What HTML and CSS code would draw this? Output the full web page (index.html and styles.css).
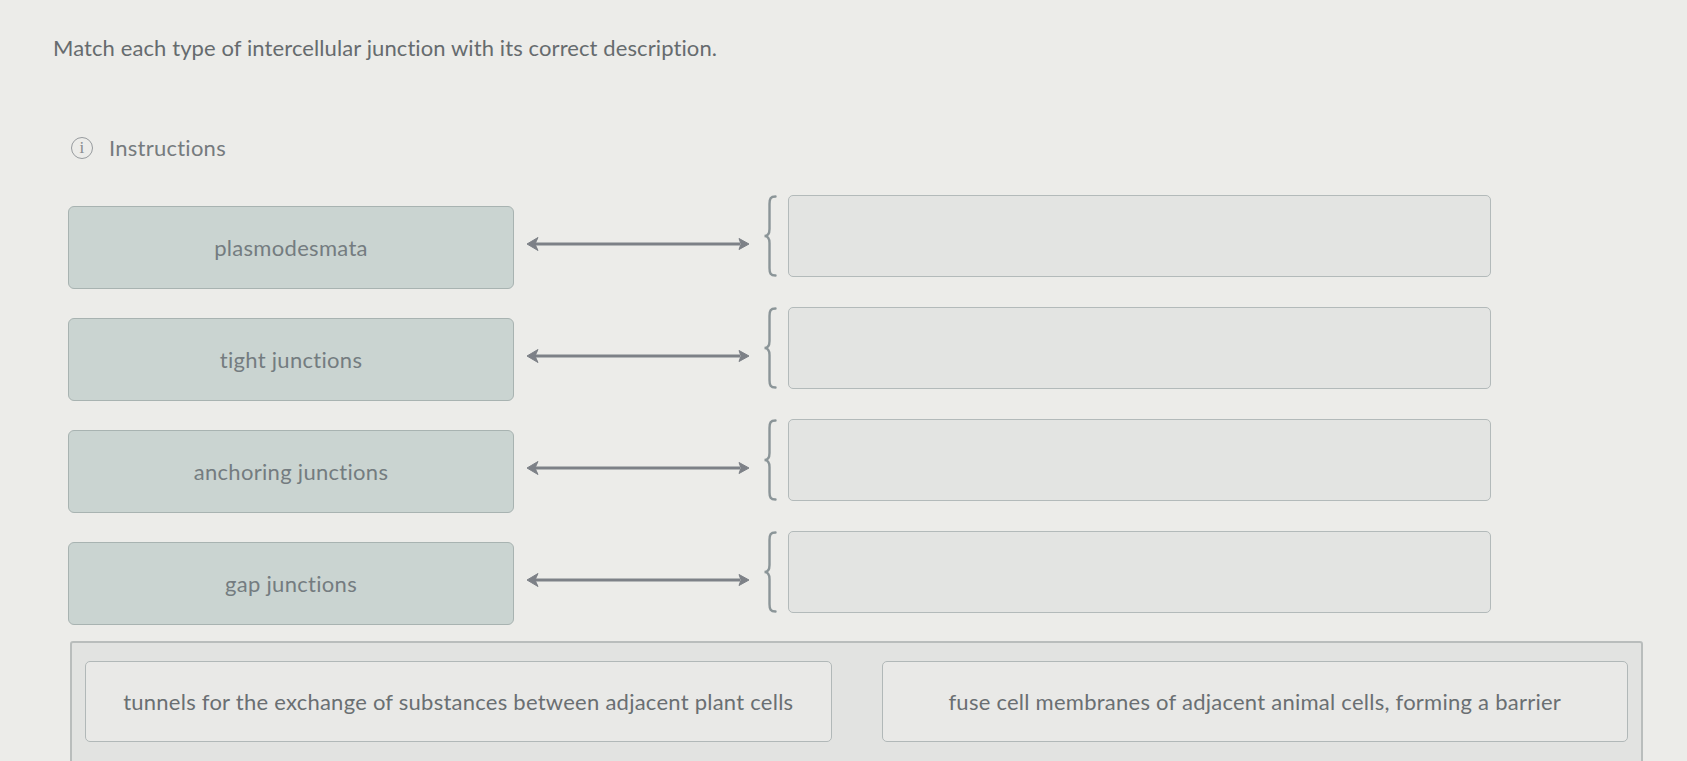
FILE: index.html
```html
<!DOCTYPE html>
<html lang="en">
<head>
<meta charset="utf-8">
<title>Match intercellular junctions</title>
<link rel="stylesheet" href="styles.css">
</head>
<body>
<div class="page">
  <h1 class="prompt">Match each type of intercellular junction with its correct description.</h1>

  <div class="instructions">
    <span class="info-icon">i</span>
    <span class="instructions-label">Instructions</span>
  </div>

  <div class="rows">
    <div class="row">
      <div class="term">plasmodesmata</div>
      <svg class="arrow" viewBox="0 0 222 14" aria-hidden="true">
        <line x1="8" y1="7" x2="213" y2="7"/>
        <polygon points="0,7 11,0.5 8,7 11,13.5"/>
        <polygon points="222,7 212,1.5 214,7 212,12.5"/>
      </svg>
      <div class="target">
        <svg class="brace" viewBox="0 0 14 82" aria-hidden="true"><path d="M12.5 1.5 C7.5 1.5 6.5 3.5 6.5 9 L6.5 34 C6.5 38.5 4.5 41 1.5 41 C4.5 41 6.5 43.5 6.5 48 L6.5 73 C6.5 78.5 7.5 80.5 12.5 80.5"/></svg>
        <div class="slot"></div>
      </div>
    </div>

    <div class="row">
      <div class="term">tight junctions</div>
      <svg class="arrow" viewBox="0 0 222 14" aria-hidden="true">
        <line x1="8" y1="7" x2="213" y2="7"/>
        <polygon points="0,7 11,0.5 8,7 11,13.5"/>
        <polygon points="222,7 212,1.5 214,7 212,12.5"/>
      </svg>
      <div class="target">
        <svg class="brace" viewBox="0 0 14 82" aria-hidden="true"><path d="M12.5 1.5 C7.5 1.5 6.5 3.5 6.5 9 L6.5 34 C6.5 38.5 4.5 41 1.5 41 C4.5 41 6.5 43.5 6.5 48 L6.5 73 C6.5 78.5 7.5 80.5 12.5 80.5"/></svg>
        <div class="slot"></div>
      </div>
    </div>

    <div class="row">
      <div class="term">anchoring junctions</div>
      <svg class="arrow" viewBox="0 0 222 14" aria-hidden="true">
        <line x1="8" y1="7" x2="213" y2="7"/>
        <polygon points="0,7 11,0.5 8,7 11,13.5"/>
        <polygon points="222,7 212,1.5 214,7 212,12.5"/>
      </svg>
      <div class="target">
        <svg class="brace" viewBox="0 0 14 82" aria-hidden="true"><path d="M12.5 1.5 C7.5 1.5 6.5 3.5 6.5 9 L6.5 34 C6.5 38.5 4.5 41 1.5 41 C4.5 41 6.5 43.5 6.5 48 L6.5 73 C6.5 78.5 7.5 80.5 12.5 80.5"/></svg>
        <div class="slot"></div>
      </div>
    </div>

    <div class="row">
      <div class="term">gap junctions</div>
      <svg class="arrow" viewBox="0 0 222 14" aria-hidden="true">
        <line x1="8" y1="7" x2="213" y2="7"/>
        <polygon points="0,7 11,0.5 8,7 11,13.5"/>
        <polygon points="222,7 212,1.5 214,7 212,12.5"/>
      </svg>
      <div class="target">
        <svg class="brace" viewBox="0 0 14 82" aria-hidden="true"><path d="M12.5 1.5 C7.5 1.5 6.5 3.5 6.5 9 L6.5 34 C6.5 38.5 4.5 41 1.5 41 C4.5 41 6.5 43.5 6.5 48 L6.5 73 C6.5 78.5 7.5 80.5 12.5 80.5"/></svg>
        <div class="slot"></div>
      </div>
    </div>
  </div>

  <div class="bank">
    <div class="card">tunnels for the exchange of substances between adjacent plant cells</div>
    <div class="card">fuse cell membranes of adjacent animal cells, forming a barrier</div>
    <div class="card"></div>
    <div class="card"></div>
  </div>
</div>
</body>
</html>
```

FILE: styles.css
```css
* {
  box-sizing: border-box;
}

body {
  margin: 0;
  background: #ecece9;
  font-family: Lato, "Open Sans", sans-serif;
  color: #6f7477;
  overflow: hidden;
}

.page {
  padding: 35px 0 0 53px;
}

.prompt {
  margin: 0;
  font-size: 22px;
  line-height: 25px;
  font-weight: 400;
  letter-spacing: 0.1px;
  color: #666b6e;
}

.instructions {
  margin-top: 75px;
  margin-left: 18px;
  height: 25px;
  display: flex;
  align-items: center;
  gap: 16px;
  font-size: 22px;
  line-height: 25px;
  letter-spacing: 0.25px;
  color: #767b7e;
}

.info-icon {
  width: 22px;
  height: 22px;
  border: 1.6px solid #979b9e;
  border-radius: 50%;
  display: flex;
  align-items: center;
  justify-content: center;
  font-family: "Liberation Serif", "DejaVu Serif", serif;
  font-size: 17px;
  line-height: 1;
  color: #868a8d;
}

.rows {
  margin-top: 46px;
  margin-left: 15px;
  display: flex;
  flex-direction: column;
  gap: 29px;
}

.row {
  display: flex;
  align-items: center;
  height: 83px;
}

.term {
  flex: none;
  width: 446px;
  height: 83px;
  border: 1.5px solid #a8b3b1;
  border-radius: 6px;
  background: #cad4d1;
  display: flex;
  align-items: center;
  justify-content: center;
  font-size: 22px;
  letter-spacing: 0.3px;
  color: #747c80;
}

.arrow {
  flex: none;
  width: 222px;
  height: 14px;
  margin-left: 13px;
  margin-top: -8px;
  fill: #7d8187;
  stroke: #7d8187;
}

.arrow line {
  stroke-width: 3;
}

.arrow polygon {
  stroke-width: 1;
  stroke-linejoin: round;
}

.target {
  flex: none;
  display: flex;
  align-items: center;
  margin-left: 14px;
  margin-top: -24px;
}

.brace {
  width: 14px;
  height: 82px;
  fill: none;
  stroke: #8b9598;
  stroke-width: 2.4;
  stroke-linecap: round;
}

.slot {
  width: 703px;
  height: 82px;
  margin-left: 11px;
  border: 1.5px solid #b3baba;
  border-radius: 5px;
  background: #e3e4e2;
}

.bank {
  width: 1573px;
  margin: 16px 0 0 17px;
  padding: 18px 13px 0;
  border: 2px solid #b9bdbc;
  border-radius: 3px;
  background: #e2e3e1;
  display: grid;
  grid-template-columns: 1fr 1fr;
  column-gap: 50px;
  row-gap: 29px;
}

.card {
  height: 81px;
  border: 1.5px solid #b1b8b8;
  border-radius: 5px;
  background: #e9e9e7;
  display: flex;
  align-items: center;
  justify-content: center;
  font-size: 22px;
  letter-spacing: 0.25px;
  color: #6a6f72;
}
```
